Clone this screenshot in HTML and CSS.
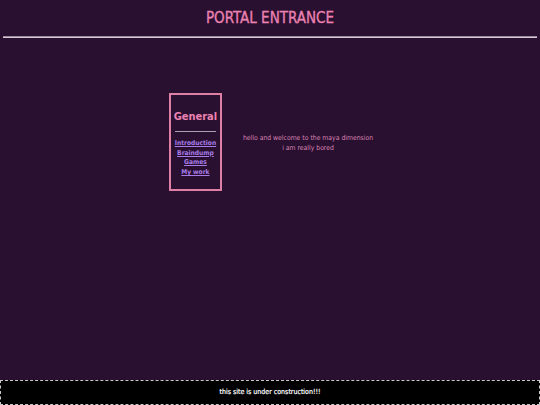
FILE: index.html
```html
<!DOCTYPE html>
<html>
<head>
<meta charset="utf-8">
<title>Portal Entrance</title>
<link rel="stylesheet" href="styles.css">
</head>
<body>
<header class="header">
  <h1 class="title">PORTAL ENTRANCE</h1>
  <hr class="rule">
</header>
<main class="content">
  <nav class="sidebar">
    <h2 class="side-title">General</h2>
    <hr class="side-rule">
    <ul class="links">
      <li><a href="#">Introduction</a></li>
      <li><a href="#">Braindump</a></li>
      <li><a href="#">Games</a></li>
      <li><a href="#">My work</a></li>
    </ul>
  </nav>
  <div class="welcome">
    <p>hello and welcome to the maya dimension</p>
    <p>i am really bored</p>
  </div>
</main>
<footer class="footer">this site is under construction!!!</footer>
</body>
</html>
```

FILE: styles.css
```css
html, body {
  margin: 0;
  padding: 0;
  height: 100%;
}
body {
  background: #2a1030;
  font-family: "Comic Sans MS", "DejaVu Sans Condensed", "DejaVu Sans", sans-serif;
  color: #e07fb0;
}
.header {
  padding-top: 8px;
}
.title {
  margin: 0;
  text-align: center;
  font-size: 15px;
  font-weight: normal;
  line-height: 20px;
  color: #ea82b2;
  -webkit-text-stroke: 0.3px #ea82b2;
}
.rule {
  margin: 8px 3px 0;
  height: 0;
  border: none;
  border-top: 1px solid #9a8a9e;
  border-bottom: 1px solid #d8c8d8;
}
.content {
  display: flex;
  justify-content: center;
  align-items: center;
  gap: 21px;
  margin-top: 55px;
  padding-left: 2px;
}
.sidebar {
  width: 49px;
  border: 2px solid #e07fa6;
  padding: 10px 0 11px;
  text-align: center;
}
.side-title {
  margin: 5px 0 0;
  font-size: 11px;
  font-weight: bold;
  line-height: 14px;
  color: #ea82b2;
}
.side-rule {
  margin: 7px 4px 7px;
  height: 0;
  border: none;
  border-top: 1px solid #a9a0ac;
}
.links {
  list-style: none;
  margin: 0;
  padding: 0;
}
.links li {
  font-size: 6.6px;
  line-height: 9.7px;
  font-weight: bold;
}
.links a {
  color: #a77be8;
  text-decoration: underline;
}
.welcome {
  text-align: center;
  font-size: 6.8px;
  line-height: 10px;
  color: #d884b4;
  padding-top: 3px;
}
.welcome p {
  margin: 0;
}
.footer {
  position: fixed;
  left: 0;
  right: 0;
  bottom: 0;
  height: 23px;
  line-height: 23px;
  background: #000;
  border: 1px dashed #c8c8c8;
  color: #fff;
  text-align: center;
  font-size: 7px;
  font-weight: normal;
  -webkit-text-stroke: 0.2px #fff;
}
```
